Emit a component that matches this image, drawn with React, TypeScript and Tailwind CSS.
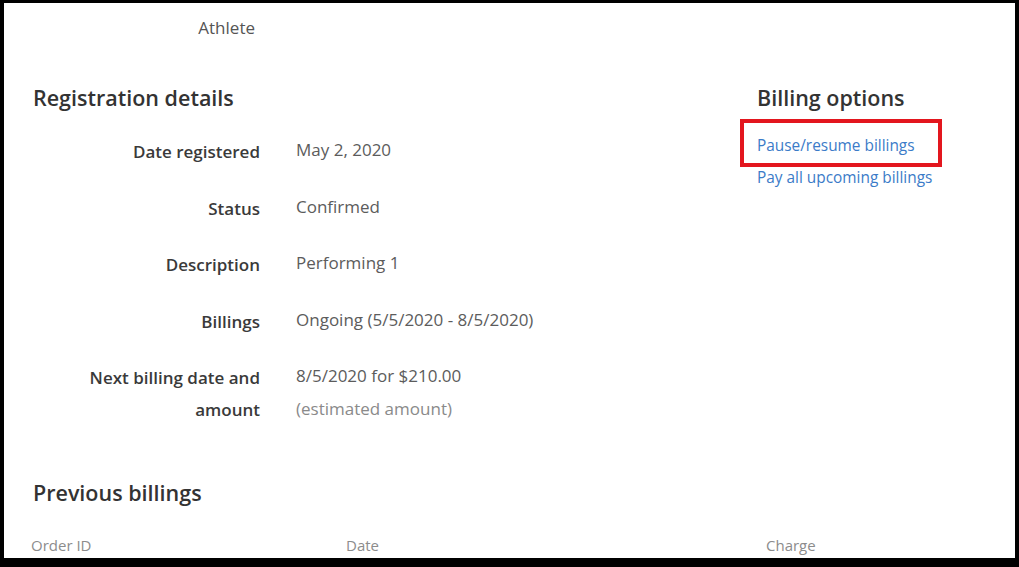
import React from "react";

const font = { fontFamily: "'Open Sans', Lato, sans-serif" };

type Row = { label: string[]; value: string[] };

const rows: Row[] = [
  { label: ["Date registered"], value: ["May 2, 2020"] },
  { label: ["Status"], value: ["Confirmed"] },
  { label: ["Description"], value: ["Performing 1"] },
  { label: ["Billings"], value: ["Ongoing (5/5/2020 - 8/5/2020)"] },
  {
    label: ["Next billing date and", "amount"],
    value: ["8/5/2020 for $210.00", "(estimated amount)"],
  },
];

function DetailRow({ row }: { row: Row }) {
  return (
    <div className="flex">
      <div className="w-[227px] pt-[3px] text-right text-[17px] font-semibold leading-[32px] text-[#3a3a3a]">
        {row.label.map((l) => (
          <div key={l}>{l}</div>
        ))}
      </div>
      <div className="ml-[36px] text-[17px] leading-[33px] text-[#5c5c5c]">
        {row.value.map((v, i) => (
          <div key={v} className={i > 0 ? "text-[#8a8a8a]" : ""}>
            {v}
          </div>
        ))}
      </div>
    </div>
  );
}

export default function App() {
  return (
    <div
      className="h-[567px] w-[1019px] overflow-hidden border-t-[3px] border-r-4 border-b-[9px] border-l-4 border-black bg-white"
      style={font}
    >
      <div className="flex flex-col pl-[29px]">
        {/* athlete line */}
        <div className="flex h-[50px] items-center">
          <div className="w-[222px] text-right text-[17px] text-[#555]">Athlete</div>
        </div>

        <div className="flex">
          {/* registration details */}
          <div className="w-[724px]">
            <h2 className="mt-[32px] text-[21.5px] font-semibold leading-[26px] text-[#333]">
              Registration details
            </h2>
            <div className="mt-[22px] flex flex-col gap-[21.5px]">
              {rows.map((r) => (
                <DetailRow key={r.label[0]} row={r} />
              ))}
            </div>
          </div>

          {/* billing options */}
          <div className="flex flex-col">
            <h2 className="mt-[32px] text-[21.5px] font-semibold leading-[26px] text-[#333]">
              Billing options
            </h2>
            <div className="mt-[8px] -ml-[17px] w-[202px] border-4 border-[#e3161e] px-[13px] pt-[13px] pb-[7px]">
              <a className="block text-[15.4px] leading-[20px] text-[#3b7bc8]">Pause/resume billings</a>
            </div>
            <a className="mt-[1px] block text-[15.4px] leading-[20px] text-[#3b7bc8]">
              Pay all upcoming billings
            </a>
          </div>
        </div>

        <h2 className="mt-[54px] text-[21.5px] font-semibold leading-[26px] text-[#333]">
          Previous billings
        </h2>

        {/* table header */}
        <div className="mt-[28px] -ml-[2px] flex text-[15px] text-[#8c8c8c]">
          <div className="w-[315px]">Order ID</div>
          <div className="w-[420px]">Date</div>
          <div>Charge</div>
        </div>
      </div>
    </div>
  );
}
